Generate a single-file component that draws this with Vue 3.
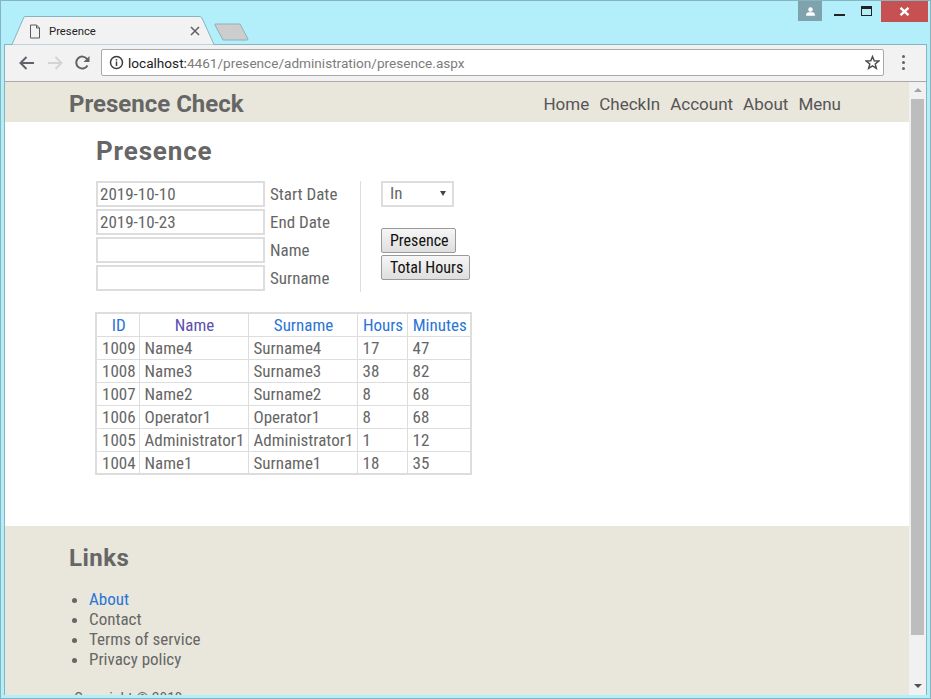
<script setup>
const rows = [
  { id: 1009, name: 'Name4', surname: 'Surname4', hours: 17, minutes: 47 },
  { id: 1008, name: 'Name3', surname: 'Surname3', hours: 38, minutes: 82 },
  { id: 1007, name: 'Name2', surname: 'Surname2', hours: 8, minutes: 68 },
  { id: 1006, name: 'Operator1', surname: 'Operator1', hours: 8, minutes: 68 },
  { id: 1005, name: 'Administrator1', surname: 'Administrator1', hours: 1, minutes: 12 },
  { id: 1004, name: 'Name1', surname: 'Surname1', hours: 18, minutes: 35 }
]
const fields = [
  { value: '2019-10-10', label: 'Start Date' },
  { value: '2019-10-23', label: 'End Date' },
  { value: '', label: 'Name' },
  { value: '', label: 'Surname' }
]
const navItems = ['Home', 'CheckIn', 'Account', 'About', 'Menu']
</script>

<template>
  <div class="window">
    <div class="titlebar">
      <div class="tab">
        <svg class="tab-shape" width="205" height="29" viewBox="0 0 205 29">
          <path d="M0 28.5 H2 L14 1 Q14.5 .5 16 .5 H189 Q191 .5 192 2 L204 28.5" fill="#f2f2f2" stroke="#86b4c0" />
        </svg>
        <svg class="tab-doc" width="12" height="15" viewBox="0 0 12 15">
          <path d="M1.5 1 H7.5 L10.5 4 V14 H1.5 Z M7.5 1 V4 H10.500" fill="none" stroke="#5a5a5a" />
        </svg>
        <span class="tab-title">Presence</span>
        <svg class="tab-close" width="10" height="10" viewBox="0 0 10 10">
          <path d="M1 1 L9 9 M9 1 L1 9" stroke="#5f5f5f" stroke-width="1.5" />
        </svg>
      </div>
      <svg class="new-tab" width="36" height="18" viewBox="0 0 36 18">
        <path d="M1 1 H26 L34 16 Q34 17 33 17 H9 L1 2 Z" fill="#cdcdcd" stroke="#8fb0b8" />
      </svg>
      <div class="win-controls">
        <div class="win-user">
          <svg width="9" height="9" viewBox="0 0 12 12">
            <circle cx="6" cy="3.400" r="3" fill="#fff" />
            <path d="M0 11.500 Q0 7 4 7 H8 Q12 7 12 11.500 Z" fill="#fff" />
          </svg>
        </div>
        <div class="win-btn"><span class="min-line"></span></div>
        <div class="win-btn"><span class="max-box"></span></div>
        <div class="win-close">
          <svg width="11" height="9" viewBox="0 0 11 9">
            <path d="M1.5 .8 L9.5 8.2 M9.5 .8 L1.5 8.2" stroke="#fff" stroke-width="2.4" />
          </svg>
        </div>
      </div>
    </div>

    <div class="browser">
      <div class="toolbar">
        <svg class="tool" width="18" height="16" viewBox="0 0 18 16">
          <path d="M16 8 H3 M8.5 2 L2.5 8 L8.5 14" fill="none" stroke="#5f6368" stroke-width="2" />
        </svg>
        <svg class="tool" width="18" height="16" viewBox="0 0 18 16">
          <path d="M2 8 H15 M9.500 2 L15.500 8 L9.500 14" fill="none" stroke="#d4d4d4" stroke-width="2" />
        </svg>
        <svg class="tool" width="17" height="16" viewBox="0 0 17 16">
          <path d="M13.500 10.500 A6 6 0 1 1 13.200 4.200" fill="none" stroke="#5f6368" stroke-width="2" />
          <path d="M15.500 1 V7 H9.500 Z" fill="#5f6368" />
        </svg>
        <div class="omnibox">
          <svg class="info" width="15" height="15" viewBox="0 0 15 15">
            <circle cx="7.500" cy="7.500" r="6" fill="none" stroke="#3c3c3c" stroke-width="1.500" />
            <path d="M7.500 6.500 V11 M7.500 4 V5.500" stroke="#3c3c3c" stroke-width="1.500" />
          </svg>
          <span class="url"><span class="host">localhost:</span>4461/presence/administration/presence.aspx</span>
          <svg class="star" width="15" height="15" viewBox="0 0 15 15">
            <path d="M7.500 1.500 L9.200 5.800 L13.800 6 L10.200 8.900 L11.400 13.400 L7.500 10.900 L3.600 13.400 L4.800 8.900 L1.200 6 L5.800 5.800 Z" fill="none" stroke="#4a4a4a" stroke-width="1.400" />
          </svg>
        </div>
        <div class="kebab"><i></i><i></i><i></i></div>
      </div>

      <div class="viewport">
        <div class="page">
          <header class="site-header">
            <span class="brand">Presence Check</span>
            <nav class="site-nav">
              <a v-for="item in navItems" :key="item">{{ item }}</a>
            </nav>
          </header>

          <main class="content">
            <h2 class="page-title">Presence</h2>
            <div class="filters">
              <div class="filter-fields">
                <div v-for="f in fields" :key="f.label" class="field-row">
                  <div class="text-input">{{ f.value }}</div>
                  <label>{{ f.label }}</label>
                </div>
              </div>
              <div class="filter-actions">
                <div class="select-box">
                  <span>In</span>
                  <span class="caret"></span>
                </div>
                <button class="btn first">Presence</button>
                <button class="btn">Total Hours</button>
              </div>
            </div>

            <table class="grid">
              <thead>
                <tr>
                  <th class="c-id">ID</th>
                  <th class="c-name visited">Name</th>
                  <th class="c-name">Surname</th>
                  <th class="c-hours">Hours</th>
                  <th class="c-min">Minutes</th>
                </tr>
              </thead>
              <tbody>
                <tr v-for="r in rows" :key="r.id">
                  <td>{{ r.id }}</td>
                  <td>{{ r.name }}</td>
                  <td>{{ r.surname }}</td>
                  <td>{{ r.hours }}</td>
                  <td>{{ r.minutes }}</td>
                </tr>
              </tbody>
            </table>
          </main>

          <footer class="site-footer">
            <h3 class="links-title">Links</h3>
            <ul class="links">
              <li><a class="link-blue">About</a></li>
              <li>Contact</li>
              <li>Terms of service</li>
              <li>Privacy policy</li>
            </ul>
            <p class="copyright">Copyright © 2019</p>
          </footer>
        </div>

        <div class="scrollbar">
          <span class="arrow up"></span>
          <div class="thumb"></div>
          <span class="arrow down"></span>
        </div>
      </div>
    </div>
  </div>
</template>

<style scoped>
.window {
  width: 931px;
  height: 699px;
  box-sizing: border-box;
  background: #b2effa;
  border: 1px solid #86b4c0;
  padding: 0 3px 3px;
  display: flex;
  flex-direction: column;
  overflow: hidden;
  font-family: Roboto, "Liberation Sans", sans-serif;
}

/* title strip */
.titlebar {
  height: 43px;
  flex: none;
  display: flex;
  align-items: flex-start;
  position: relative;
}
.tab {
  width: 205px;
  height: 29px;
  margin-top: 15px;
  margin-left: 6px;
  position: relative;
  display: flex;
  align-items: center;
  padding: 2px 0 0 19px;
  box-sizing: border-box;
  z-index: 1;
}
.tab-shape {
  position: absolute;
  left: 0;
  top: 0;
}
.tab-doc {
  position: relative;
  margin-bottom: 1px;
}
.tab-title {
  position: relative;
  width: 141px;
  font-size: 11.3px;
  color: #222;
  margin-left: 8px;
  margin-bottom: 1px;
}
.tab-close {
  position: relative;
  margin-bottom: 1px;
}
.new-tab {
  margin-top: 22px;
  margin-left: -1px;
}
.win-controls {
  margin-left: auto;
  margin-right: -1px;
  display: flex;
  align-items: flex-start;
}
.win-user {
  width: 24px;
  height: 20px;
  background: #7fa3ad;
  display: flex;
  align-items: center;
  justify-content: center;
  margin-right: 3px;
}
.win-btn {
  width: 28px;
  height: 20px;
  position: relative;
}
.min-line {
  position: absolute;
  left: 9px;
  top: 13px;
  width: 11px;
  height: 2px;
  background: #222;
}
.max-box {
  position: absolute;
  left: 8px;
  top: 5px;
  width: 9px;
  height: 6px;
  border: 1.500px solid #222;
  border-top-width: 3px;
}
.win-close {
  width: 47px;
  height: 21px;
  background: #c75050;
  display: flex;
  align-items: center;
  justify-content: center;
}

/* browser chrome */
.browser {
  flex: 1;
  min-height: 0;
  display: flex;
  flex-direction: column;
  background: #f2f2f2;
  border-left: 1px solid #86b4c0;
  border-right: 1px solid #86b4c0;
  border-top: 1px solid #86b4c0;
}
.toolbar {
  height: 37px;
  flex: none;
  display: flex;
  align-items: center;
  box-sizing: border-box;
  border-bottom: 1px solid #a9a9a9;
  padding-left: 13px;
  padding-bottom: 1px;
}
.tool {
  margin-right: 10px;
}
.omnibox {
  width: 783px;
  height: 27px;
  box-sizing: border-box;
  background: #fff;
  border: 1px solid #a9a9a9;
  border-radius: 2px;
  display: flex;
  align-items: center;
  padding: 0 3px 0 7px;
}
.url {
  margin-left: 4px;
  font-size: 13.6px;
  color: #7c7c7c;
}
.host {
  color: #222;
}
.star {
  margin-left: auto;
}
.kebab {
  margin-left: 18px;
  display: flex;
  flex-direction: column;
  gap: 3px;
}
.kebab i {
  width: 3px;
  height: 3px;
  border-radius: 50%;
  background: #5f6368;
}

.viewport {
  flex: 1;
  min-height: 0;
  display: flex;
  overflow: hidden;
}
.page {
  flex: 1;
  min-width: 0;
  overflow: hidden;
  color: #666;
  font-stretch: condensed;
}
.scrollbar {
  width: 17px;
  flex: none;
  background: #f1f1f1;
  display: flex;
  flex-direction: column;
  align-items: center;
  padding: 6px 0 7px;
  box-sizing: border-box;
}
.arrow {
  width: 0;
  height: 0;
  border-left: 4px solid transparent;
  border-right: 4px solid transparent;
}
.arrow.up {
  border-bottom: 4px solid #a3a3a3;
  margin-bottom: 7px;
}
.arrow.down {
  border-top: 4px solid #505050;
  margin-top: auto;
}
.thumb {
  width: 13px;
  height: 536px;
  background: #bdbdbd;
}

/* page */
.site-header {
  height: 40px;
  background: #e9e6dc;
  display: flex;
  align-items: center;
  justify-content: space-between;
  padding: 4px 68px 0 64px;
  box-sizing: border-box;
}
.brand {
  font-size: 24px;
  font-weight: 700;
  font-stretch: normal;
  color: #666;
}
.site-nav {
  display: flex;
  gap: 10px;
  font-size: 17px;
  font-stretch: normal;
  color: #555;
}
.content {
  height: 404px;
  box-sizing: border-box;
  background: #fff;
  padding: 14px 0 0 91px;
}
.page-title {
  margin: 0 0 15px;
  font-size: 26px;
  line-height: 30px;
  font-weight: 700;
  font-stretch: normal;
  color: #666;
  letter-spacing: .85px;
}
.filters {
  display: flex;
  align-items: flex-start;
}
.filter-fields {
  width: 264px;
  border-right: 1px solid #ddd;
  display: flex;
  flex-direction: column;
  gap: 2px;
  padding-bottom: 1px;
}
.field-row {
  display: flex;
  align-items: center;
  gap: 5px;
  height: 26px;
  font-size: 17px;
}
.text-input {
  width: 169px;
  height: 26px;
  box-sizing: border-box;
  border: 2px solid #ddd;
  padding-left: 2px;
  line-height: 22px;
  color: #666;
}
.filter-actions {
  margin-left: 20px;
  display: flex;
  flex-direction: column;
  align-items: flex-start;
  font-size: 17px;
}
.select-box {
  width: 73px;
  height: 26px;
  box-sizing: border-box;
  border: 2px solid #ddd;
  padding: 0 6px 2px 7px;
  display: flex;
  align-items: center;
  justify-content: space-between;
  color: #666;
}
.caret {
  width: 0;
  height: 0;
  border-left: 3px solid transparent;
  border-right: 3px solid transparent;
  border-top: 5px solid #444;
}
.btn {
  height: 25px;
  padding: 0 6px 1px 8px;
  margin: 0 0 2px;
  box-sizing: border-box;
  border: 1px solid #9a9a9a;
  border-radius: 2px;
  background: linear-gradient(#f6f6f6, #dedede);
  font: inherit;
  font-size: 16px;
  color: #111;
}
.btn.first {
  margin-top: 21px;
}
.grid {
  margin-top: 20px;
  margin-left: -1px;
  width: 376px;
  table-layout: fixed;
  border-collapse: collapse;
  border: 2px solid #ddd;
  font-size: 17px;
  color: #666;
}
.grid th,
.grid td {
  border: 1px solid #ddd;
  height: 23px;
  padding: 1px 0 0 5px;
  white-space: nowrap;
  box-sizing: border-box;
  line-height: 20px;
}
.grid th {
  font-weight: 400;
  color: #2a75d6;
  text-align: center;
  padding: 1px 0 0 2px;
}
.grid th.visited {
  color: #5a4fb0;
}
.grid td {
  text-align: left;
}
.c-id { width: 43px; }
.c-name { width: 109px; }
.c-hours { width: 50px; }
.c-min { width: 64px; }

.site-footer {
  background: #e9e6dc;
  padding: 17px 0 0 64px;
  height: 200px;
  box-sizing: border-box;
  font-size: 17px;
  color: #666;
}
.links-title {
  margin: 0 0 16px;
  font-size: 24px;
  line-height: 30px;
  font-weight: 700;
  font-stretch: normal;
  letter-spacing: .5px;
}
.links {
  margin: 0;
  padding: 0 0 0 20px;
  line-height: 20px;
}
.link-blue {
  color: #2a75d6;
}
.copyright {
  margin: 19px 0 0 5px;
  font-size: 15.500px;
  line-height: 20px;
}
</style>

<style>
html, body {
  margin: 0;
  overflow: hidden;
}
</style>
